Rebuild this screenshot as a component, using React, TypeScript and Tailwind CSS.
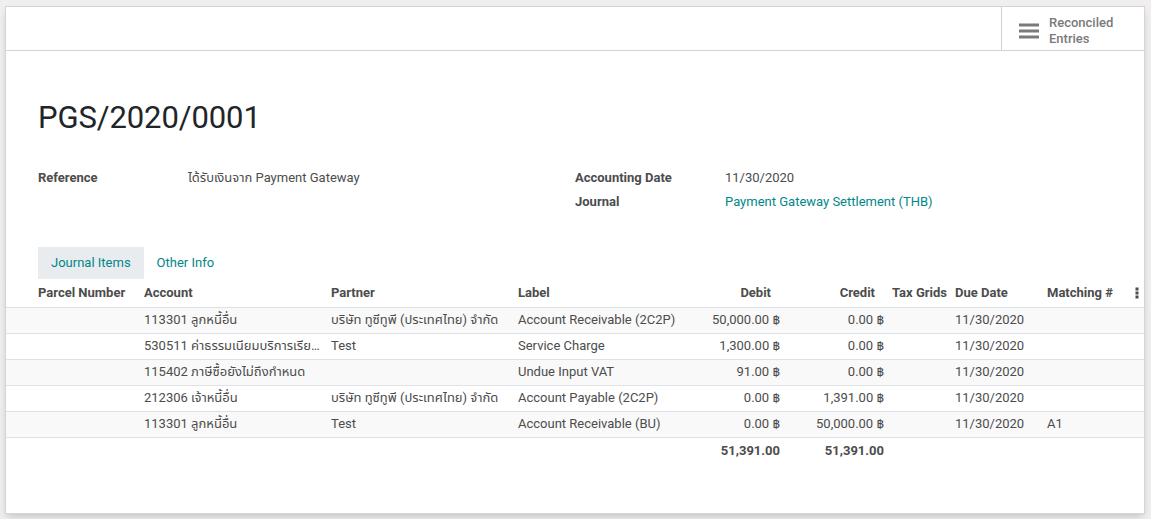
import React from 'react';

const LINES = [
  { account: '113301 ลูกหนี้อื่น', partner: 'บริษัท ทูซีทูพี (ประเทศไทย) จำกัด', label: 'Account Receivable (2C2P)', debit: '50,000.00 ฿', credit: '0.00 ฿', due: '11/30/2020', match: '' },
  { account: '530511 ค่าธรรมเนียมบริการเรียกเก็บ', partner: 'Test', label: 'Service Charge', debit: '1,300.00 ฿', credit: '0.00 ฿', due: '11/30/2020', match: '' },
  { account: '115402 ภาษีซื้อยังไม่ถึงกำหนด', partner: '', label: 'Undue Input VAT', debit: '91.00 ฿', credit: '0.00 ฿', due: '11/30/2020', match: '' },
  { account: '212306 เจ้าหนี้อื่น', partner: 'บริษัท ทูซีทูพี (ประเทศไทย) จำกัด', label: 'Account Payable (2C2P)', debit: '0.00 ฿', credit: '1,391.00 ฿', due: '11/30/2020', match: '' },
  { account: '113301 ลูกหนี้อื่น', partner: 'Test', label: 'Account Receivable (BU)', debit: '0.00 ฿', credit: '50,000.00 ฿', due: '11/30/2020', match: 'A1' },
];

const FONT = { fontFamily: 'Roboto, "Noto Sans", "Noto Sans Thai", "DejaVu Sans", sans-serif' };

export default function App() {
  return (
    <div className="w-[1151px] h-[519px] bg-[#f0eeee] pt-[6px] px-[5px] overflow-hidden text-[13px] text-[#4c4c4c]" style={FONT}>
      <div className="w-[1140px] h-[508px] bg-white border border-[#d5d5d5] shadow-[0_4px_8px_-2px_rgba(0,0,0,0.2)] flex flex-col">
        {/* Button box */}
        <div className="h-[44px] flex justify-end border-b border-[#ccd3da]">
          <button className="w-[143px] h-full border-l border-[#ccd3da] flex items-center gap-[10px] pl-[17px] pt-[4px] text-left text-[#7a7a7a] font-medium leading-[16px]">
            <svg width="20" height="16" viewBox="0 0 20 16" className="shrink-0">
              <rect x="0" y="0.5" width="20" height="3" fill="#7a7a7a" />
              <rect x="0" y="6.5" width="20" height="3" fill="#7a7a7a" />
              <rect x="0" y="12.5" width="20" height="3" fill="#7a7a7a" />
            </svg>
            <span>Reconciled<br />Entries</span>
          </button>
        </div>

        {/* Title */}
        <div className="pt-[45px] px-[32px]">
          <h1 className="text-[31px] leading-[44px] text-[#212529] tracking-[-0.1px]">PGS/2020/0001</h1>
        </div>

        {/* Fields */}
        <div className="flex px-[32px] mt-[26px]">
          <div className="w-[537px] flex flex-col">
            <div className="flex h-[24px] items-center">
              <span className="w-[150px] font-bold">Reference</span>
              <span>ได้รับเงินจาก Payment Gateway</span>
            </div>
          </div>
          <div className="flex flex-col">
            <div className="flex h-[24px] items-center">
              <span className="w-[150px] font-bold">Accounting Date</span>
              <span>11/30/2020</span>
            </div>
            <div className="flex h-[24px] items-center">
              <span className="w-[150px] font-bold">Journal</span>
              <span className="text-[#00878a]">Payment Gateway Settlement (THB)</span>
            </div>
          </div>
        </div>

        {/* Tabs */}
        <div className="flex px-[32px] mt-[33px]">
          <div className="h-[32px] px-[13px] flex items-center bg-[#e9ecef] text-[#00878a]">Journal Items</div>
          <div className="h-[32px] px-[13px] flex items-center text-[#00878a]">Other Info</div>
        </div>

        {/* Lines table */}
        <table className="table-fixed border-collapse w-[1138px]">
          <colgroup>
            <col className="w-[134px]" />
            <col className="w-[187px]" />
            <col className="w-[187px]" />
            <col className="w-[176px]" />
            <col className="w-[94px]" />
            <col className="w-[104px]" />
            <col className="w-[63px]" />
            <col className="w-[92px]" />
            <col className="w-[88px]" />
            <col className="w-[13px]" />
          </colgroup>
          <thead>
            <tr className="h-[28px] border-b border-[#dee2e6] shadow-[0_1px_1px_rgba(0,0,0,0.06)] font-bold text-left">
              <th className="pl-[32px] pr-1 whitespace-nowrap">Parcel Number</th>
              <th className="px-1">Account</th>
              <th className="px-1">Partner</th>
              <th className="px-1">Label</th>
              <th className="pl-1 pr-[13px] text-right">Debit</th>
              <th className="pl-1 pr-[13px] text-right">Credit</th>
              <th className="px-1 whitespace-nowrap">Tax Grids</th>
              <th className="px-1">Due Date</th>
              <th className="px-1">Matching #</th>
              <th className="p-0">
                <svg width="4" height="12" viewBox="0 0 4 12" className="ml-[4px]">
                  <rect x="0.5" y="0.5" width="3" height="3" fill="#4c4c4c" />
                  <rect x="0.5" y="4.5" width="3" height="3" fill="#4c4c4c" />
                  <rect x="0.5" y="8.5" width="3" height="3" fill="#4c4c4c" />
                </svg>
              </th>
            </tr>
          </thead>
          <tbody>
            {LINES.map((l, i) => (
              <tr key={i} className={`h-[26px] border-b border-[#dee2e6] ${i % 2 === 0 ? 'bg-[#f9f9f9]' : 'bg-white'}`}>
                <td className="pl-[32px] pr-1"></td>
                <td className="px-1 truncate">{l.account}</td>
                <td className="px-1 truncate">{l.partner}</td>
                <td className="px-1 truncate">{l.label}</td>
                <td className="px-1 text-right whitespace-nowrap">{l.debit}</td>
                <td className="px-1 text-right whitespace-nowrap">{l.credit}</td>
                <td className="px-1"></td>
                <td className="px-1">{l.due}</td>
                <td className="px-1">{l.match}</td>
                <td></td>
              </tr>
            ))}
          </tbody>
          <tfoot>
            <tr className="h-[26px] font-bold">
              <td colSpan={4}></td>
              <td className="px-1 text-right">51,391.00</td>
              <td className="px-1 text-right">51,391.00</td>
              <td colSpan={4}></td>
            </tr>
          </tfoot>
        </table>
      </div>
    </div>
  );
}
